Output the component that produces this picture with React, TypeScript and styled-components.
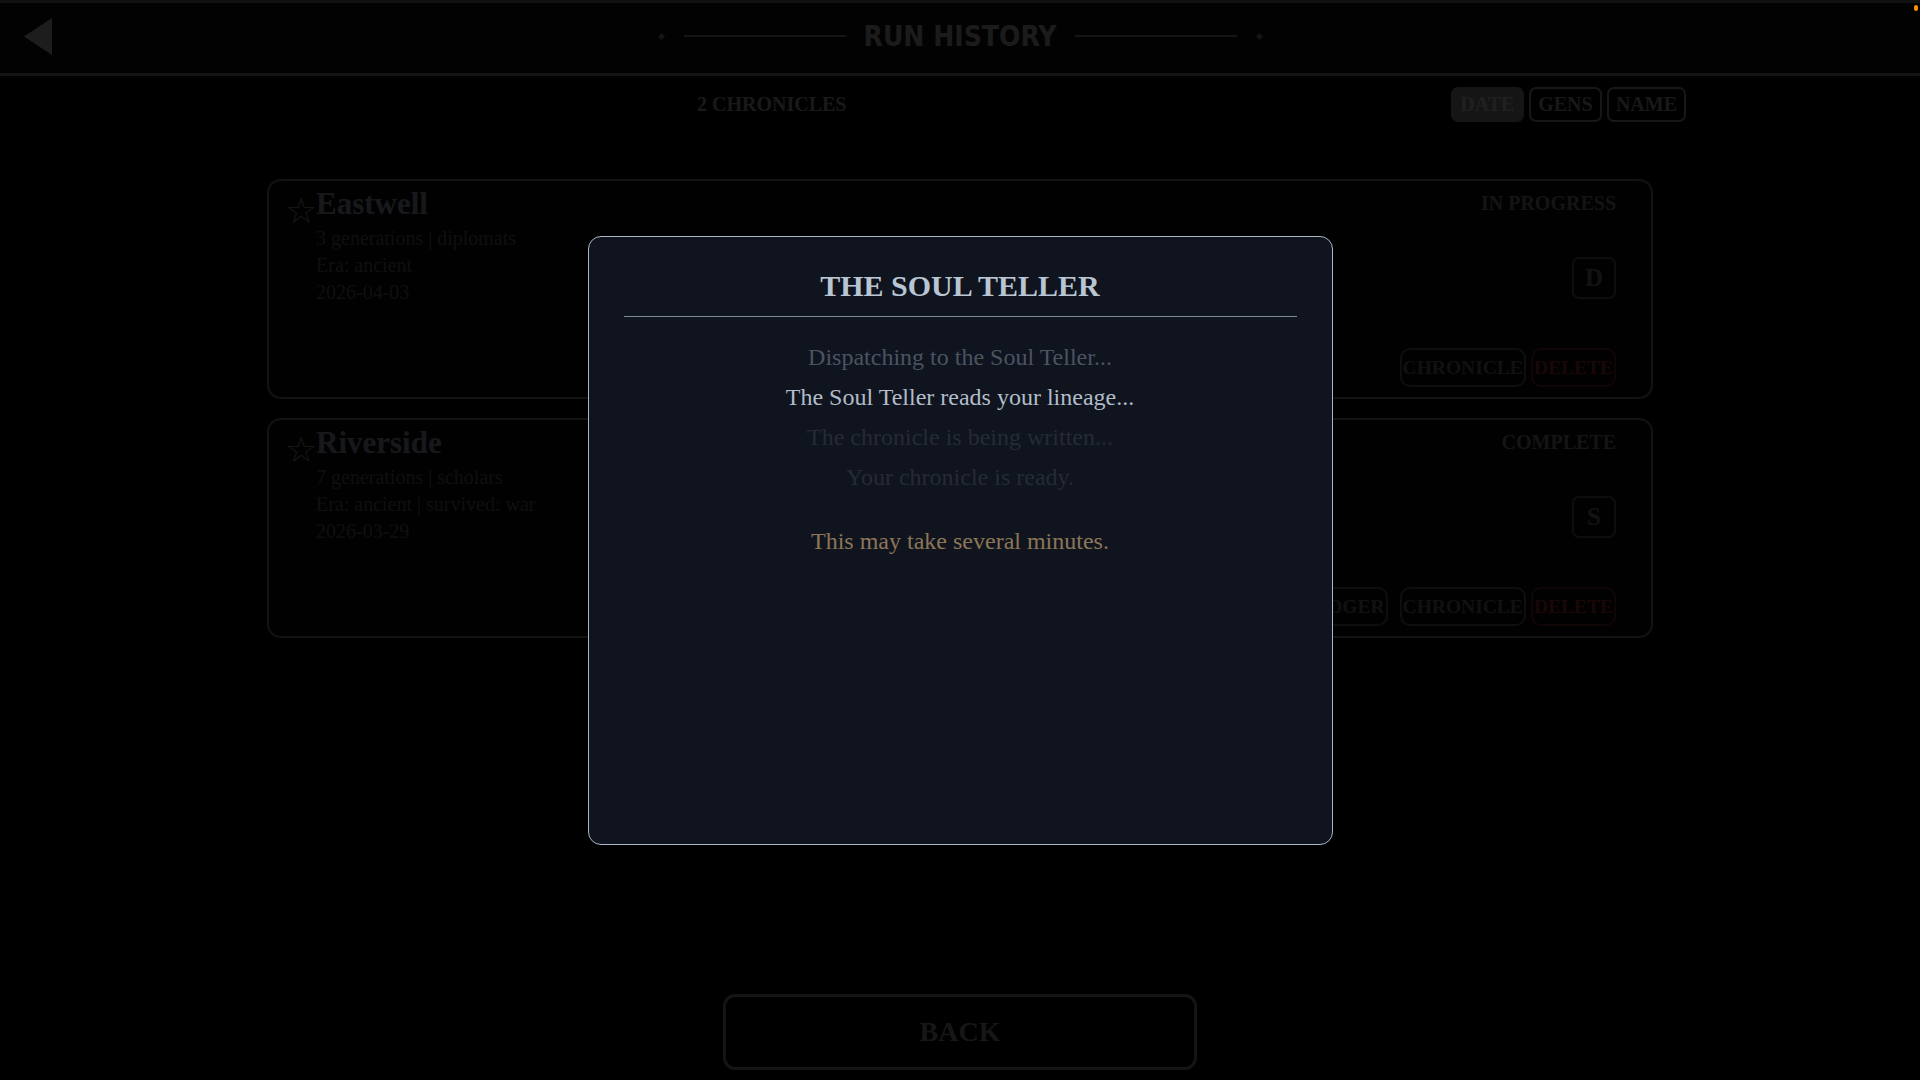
import styled, { createGlobalStyle } from "styled-components";

type Run = {
  name: string;
  lines: string[];
  status: string;
  grade: string;
  actions: string[];
};

const runs: Run[] = [
  {
    name: "Eastwell",
    lines: ["3 generations | diplomats", "Era: ancient", "2026-04-03"],
    status: "IN PROGRESS",
    grade: "D",
    actions: ["CHRONICLE", "DELETE"],
  },
  {
    name: "Riverside",
    lines: ["7 generations | scholars", "Era: ancient | survived: war", "2026-03-29"],
    status: "COMPLETE",
    grade: "S",
    actions: ["LEDGER", "CHRONICLE", "DELETE"],
  },
];

const steps = [
  { text: "Dispatching to the Soul Teller...", state: "done" },
  { text: "The Soul Teller reads your lineage...", state: "active" },
  { text: "The chronicle is being written...", state: "pending" },
  { text: "Your chronicle is ready.", state: "pending" },
] as const;

const serif = `"Liberation Serif", "Times New Roman", serif`;

const GlobalStyle = createGlobalStyle`
  html, body {
    margin: 0;
    padding: 0;
    background: #000;
    overflow: hidden;
  }
  * { box-sizing: border-box; }
`;

const Page = styled.div`
  width: 1920px;
  height: 1080px;
  display: flex;
  flex-direction: column;
  background: #000;
  font-family: ${serif};
  position: relative;
`;

const TopBar = styled.header`
  height: 76px;
  padding-bottom: 4px;
  display: grid;
  grid-template-columns: 1fr auto 1fr;
  align-items: center;
  border-top: 3px solid #707070;
  border-bottom: 3px solid #8e8e8e;
  background: #101010;
`;

const BackArrow = styled.button`
  justify-self: start;
  margin-left: 24px;
  padding: 0;
  border: none;
  background: none;
  display: flex;
  cursor: pointer;
`;

const TitleWrap = styled.div`
  display: flex;
  align-items: center;
  gap: 18px;
`;

const Ornament = styled.span<{ $flip?: boolean }>`
  display: flex;
  align-items: center;
  gap: 20px;
  flex-direction: ${(p) => (p.$flip ? "row-reverse" : "row")};

  &::before {
    content: "";
    width: 5px;
    height: 5px;
    background: #8c8c8c;
    transform: rotate(45deg);
  }
  &::after {
    content: "";
    width: 162px;
    height: 2px;
    background: #8c8c8c;
  }
`;

const Title = styled.h1`
  margin: 0;
  font-family: "Liberation Sans Narrow", "DejaVu Sans Condensed", sans-serif;
  font-stretch: condensed;
  font-weight: 700;
  font-size: 28px;
  color: #b4b4b4;
`;

const Toolbar = styled.div`
  display: flex;
  align-items: center;
  padding: 11px 234px 0 697px;
  height: 46px;
`;

const Count = styled.span`
  font-weight: 700;
  font-size: 20px;
  color: #a8a8a8;
`;

const SortGroup = styled.div`
  margin-left: auto;
  display: flex;
  gap: 5px;
`;

const SortButton = styled.button<{ $active?: boolean }>`
  height: 35px;
  padding: 0 7px;
  min-width: 73px;
  border-radius: 7px;
  border: 2px solid ${(p) => (p.$active ? "#8a8a8a" : "#9a9a9a")};
  background: ${(p) => (p.$active ? "#8a8a8a" : "transparent")};
  font-family: ${serif};
  font-weight: 700;
  font-size: 20px;
  color: ${(p) => (p.$active ? "#d8d8d8" : "#a0a0a0")};
`;

const List = styled.main`
  margin: 57px auto 0;
  width: 1386px;
  display: flex;
  flex-direction: column;
  gap: 19px;
`;

const Card = styled.section`
  height: 220px;
  display: flex;
  justify-content: space-between;
  padding: 10px 35px 10px 16px;
  border: 2px solid #7c7c7c;
  border-radius: 14px;
  background: #0c0c0c;
`;

const CardMain = styled.div`
  display: flex;
  align-items: flex-start;
`;

const Star = styled.span`
  font-family: "DejaVu Sans", sans-serif;
  font-size: 36px;
  line-height: 34px;
  margin-top: 3px;
  width: 31px;
  color: #8e8e8e;
`;

const Info = styled.div`
  display: flex;
  flex-direction: column;
`;

const Name = styled.h2`
  margin: 0 0 8px;
  font-size: 31px;
  line-height: 26px;
  font-weight: 700;
  color: #9aa0b8;
`;

const Meta = styled.div`
  font-size: 20px;
  line-height: 27px;
  color: #5c6274;
`;

const CardSide = styled.div`
  display: flex;
  flex-direction: column;
  align-items: flex-end;
`;

const Status = styled.span`
  font-weight: 700;
  font-size: 20px;
  line-height: 24px;
  color: #848484;
`;

const Grade = styled.span`
  margin-top: 42px;
  width: 44px;
  height: 42px;
  display: flex;
  align-items: center;
  justify-content: center;
  border: 2px solid #5a5a5a;
  border-radius: 7px;
  font-weight: 700;
  font-size: 25px;
  color: #7a7a7a;
`;

const Actions = styled.div`
  margin-top: auto;
  display: flex;
  gap: 5px;
`;

const ActionButton = styled.button<{ $danger?: boolean }>`
  height: 39px;
  padding: 0 1px;
  border-radius: 10px;
  border: 2px solid ${(p) => (p.$danger ? "#6a2424" : "#5e5e5e")};
  background: transparent;
  font-family: ${serif};
  font-weight: 700;
  font-size: 19.5px;
  color: ${(p) => (p.$danger ? "#a83030" : "#707070")};

  &:first-child:not(:nth-last-child(2)) {
    margin-right: 7px;
  }
`;

const BackButton = styled.button`
  margin: auto auto 10px;
  width: 474px;
  height: 76px;
  border: 3px solid #888;
  border-radius: 12px;
  background: transparent;
  font-family: ${serif};
  font-weight: 700;
  font-size: 28px;
  color: #969696;
`;

const Overlay = styled.div`
  position: fixed;
  inset: 0;
  background: rgba(0, 0, 0, 0.85);
  display: flex;
  align-items: center;
  justify-content: center;
`;

const Dialog = styled.div`
  width: 745px;
  height: 609px;
  padding: 31px 35px;
  border: 1.5px solid #aab7c6;
  border-radius: 13px;
  background: #10141e;
  text-align: center;
`;

const DialogTitle = styled.h2`
  margin: 0;
  padding-bottom: 12px;
  border-bottom: 1px solid #7d8998;
  font-size: 30px;
  line-height: 36px;
  font-weight: 700;
  color: #b9c5d3;
`;

const Steps = styled.ul`
  list-style: none;
  margin: 20px 0 0;
  padding: 0;
`;

const stepColor = { done: "#4b5362", active: "#b2bcc9", pending: "#252b36" };

const Step = styled.li<{ $state: keyof typeof stepColor }>`
  font-size: 24px;
  line-height: 40px;
  color: ${(p) => stepColor[p.$state]};
`;

const Note = styled.p`
  margin: 24px 0 0;
  font-size: 24px;
  line-height: 40px;
  color: #8c7658;
`;

const PingDot = styled.span`
  position: fixed;
  top: 5px;
  right: 2px;
  width: 4px;
  height: 6px;
  border-radius: 2px;
  background: #ff8a00;
`;

export default function App() {
  return (
    <>
      <GlobalStyle />
      <Page>
        <TopBar>
          <BackArrow aria-label="Back">
            <svg width="28" height="37" viewBox="0 0 28 37">
              <polygon points="28,0 28,37 0,18.5" fill="#c4c4c4" />
            </svg>
          </BackArrow>
          <TitleWrap>
            <Ornament />
            <Title>RUN HISTORY</Title>
            <Ornament $flip />
          </TitleWrap>
          <span />
        </TopBar>

        <Toolbar>
          <Count>2 CHRONICLES</Count>
          <SortGroup>
            <SortButton $active>DATE</SortButton>
            <SortButton>GENS</SortButton>
            <SortButton>NAME</SortButton>
          </SortGroup>
        </Toolbar>

        <List>
          {runs.map((run) => (
            <Card key={run.name}>
              <CardMain>
                <Star>☆</Star>
                <Info>
                  <Name>{run.name}</Name>
                  {run.lines.map((line) => (
                    <Meta key={line}>{line}</Meta>
                  ))}
                </Info>
              </CardMain>
              <CardSide>
                <Status>{run.status}</Status>
                <Grade>{run.grade}</Grade>
                <Actions>
                  {run.actions.map((a) => (
                    <ActionButton key={a} $danger={a === "DELETE"}>
                      {a}
                    </ActionButton>
                  ))}
                </Actions>
              </CardSide>
            </Card>
          ))}
        </List>

        <BackButton>BACK</BackButton>

        <Overlay>
          <Dialog>
            <DialogTitle>THE SOUL TELLER</DialogTitle>
            <Steps>
              {steps.map((s) => (
                <Step key={s.text} $state={s.state}>
                  {s.text}
                </Step>
              ))}
            </Steps>
            <Note>This may take several minutes.</Note>
          </Dialog>
        </Overlay>
        <PingDot />
      </Page>
    </>
  );
}
